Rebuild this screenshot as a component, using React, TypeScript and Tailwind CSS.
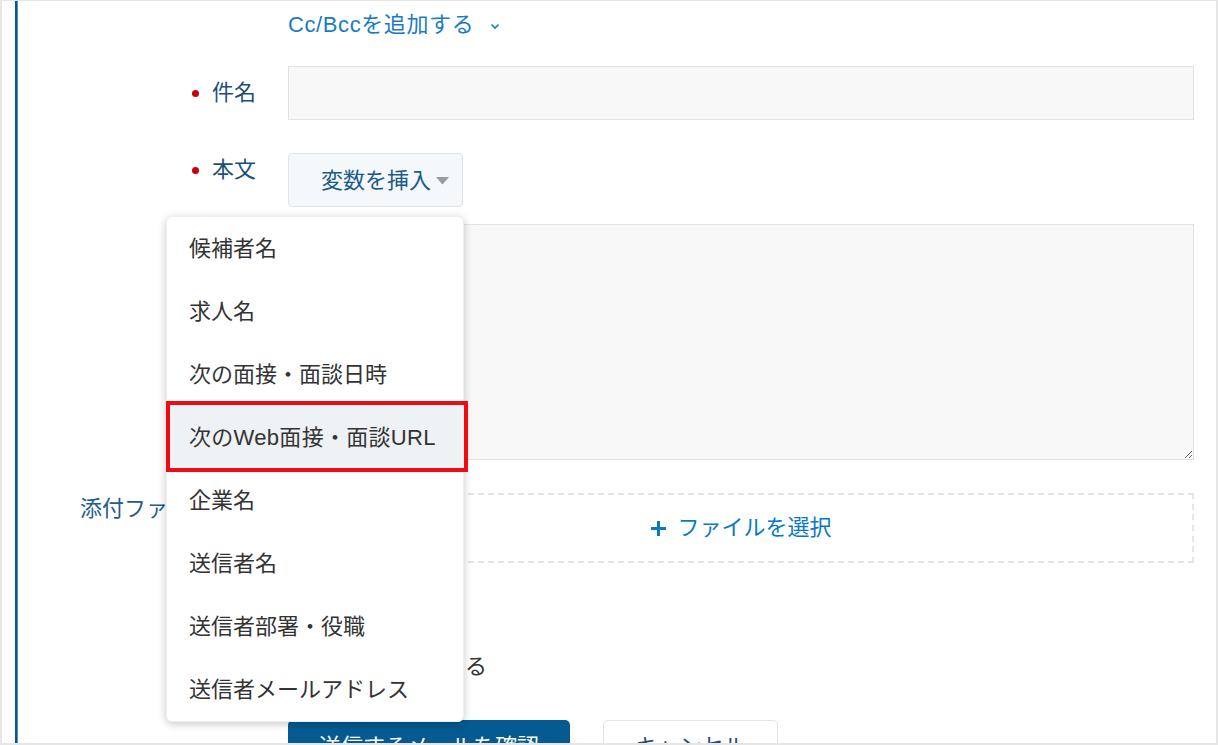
import React from "react";

const items = [
  "候補者名",
  "求人名",
  "次の面接・面談日時",
  "次のWeb面接・面談URL",
  "企業名",
  "送信者名",
  "送信者部署・役職",
  "送信者メールアドレス",
];

function Bullet() {
  return <span className="inline-block w-[7px] h-[7px] rounded-full bg-[#c8000a] mr-[13px] mt-[1px]" />;
}

export default function App() {
  return (
    <div className="relative w-[1218px] h-[745px] overflow-hidden bg-white border-t border-l-2 border-r-2 border-b-2 border-[#e6e6e6] font-['Liberation_Sans','Noto_Sans_CJK_JP',sans-serif] text-[22px]">
      <div className="flex h-full pl-[13px]">
        <div className="w-[3px] h-full flex">
          <div className="w-[2px] h-full bg-[#045a93]" />
          <div className="w-[1px] h-full bg-[#4a90c8]" />
        </div>
        <div className="flex-1 flex flex-col">
          {/* Cc/Bcc */}
          <div className="grid grid-cols-[270px_906px] pt-[10px]">
            <div />
            <div className="flex items-center h-[28px] text-[#1a7bc4] text-[22px] leading-[28px]">
              <span className="tracking-[0.6px]">Cc/Bccを追加する</span>
              <svg className="ml-[16px] mt-[2px]" width="10" height="7" viewBox="0 0 10 7">
                <path d="M1.5 1.5 L5 5 L8.5 1.5" fill="none" stroke="#1a7bc4" strokeWidth="1.6" />
              </svg>
            </div>
          </div>

          {/* Subject */}
          <div className="grid grid-cols-[270px_906px] mt-[27px] items-center">
            <div className="flex items-center justify-end pr-[32px] text-[#1e4f77] leading-[28px]">
              <Bullet />
              <span>件名</span>
            </div>
            <div className="h-[54px] bg-[#f8f8f8] border border-[#e2e2e2]" />
          </div>

          {/* Body */}
          <div className="grid grid-cols-[270px_906px] mt-[33px] items-start">
            <div className="flex items-center justify-end pr-[32px] pt-[3px] text-[#1e4f77] leading-[28px]">
              <Bullet />
              <span>本文</span>
            </div>
            <div className="flex flex-col">
              <div className="w-[175px] h-[54px] rounded-[4px] bg-[#f5f8fa] border border-[#dde6ed] flex items-center pl-[32px] text-[#1b5a8a]">
                <span className="leading-[28px] mt-[1px]">変数を挿入</span>
                <svg className="ml-[5px] mt-[1px]" width="13" height="8" viewBox="0 0 13 8">
                  <path d="M0 0 L13 0 L6.5 7.5 Z" fill="#9a9a9a" />
                </svg>
              </div>
              <textarea className="mt-[17px] h-[236px] w-[906px] bg-[#f8f8f8] border border-[#e2e2e2] outline-none resize-y" />
            </div>
          </div>

          {/* Attach */}
          <div className="grid grid-cols-[270px_906px] mt-[33px] items-start">
            <div className="flex justify-end pr-[76px] pt-[2px] text-[#215d8e] leading-[28px]">
              <span>添付ファイル</span>
            </div>
            <div className="h-[70px] border-2 border-dashed border-[#e4e4e4] flex items-center justify-center text-[#0b78c4]">
              <svg className="mr-[10px]" width="17" height="17" viewBox="0 0 17 17">
                <path d="M8.5 1 V16 M1 8.5 H16" stroke="#0b78c4" strokeWidth="3" />
              </svg>
              <span className="leading-[28px]">ファイルを選択</span>
            </div>
          </div>

          {/* Checkbox row */}
          <div className="grid grid-cols-[270px_906px] mt-[90px]">
            <div />
            <div className="flex items-center h-[28px] text-[#333] leading-[28px]">
              <span className="w-[18px] h-[18px] border border-[#bbb] rounded-[3px] mr-[5px]" />
              <span>候補者に送信する</span>
            </div>
          </div>

          {/* Buttons */}
          <div className="grid grid-cols-[270px_906px] mt-[39px]">
            <div />
            <div className="flex gap-[33px]">
              <div className="w-[282px] h-[54px] rounded-[5px] bg-[#045a91] text-white flex items-center justify-center">
                <span className="leading-[28px]">送信するメールを確認</span>
              </div>
              <div className="w-[175px] h-[54px] rounded-[5px] bg-white border border-[#dde6ed] text-[#1e4f77] flex items-center justify-center">
                <span className="leading-[28px]">キャンセル</span>
              </div>
            </div>
          </div>
        </div>
      </div>

      {/* Dropdown menu */}
      <div className="absolute left-[164px] top-[215px] w-[298px] rounded-[6px] bg-white shadow-[0_2px_8px_rgba(0,0,0,0.22)] border border-[#eeeeee]">
        {items.map((t, i) => (
          <div key={t} className="relative h-[63px] flex items-center pl-[22px] text-[#333] leading-[28px]">
            {i === 3 && (
              <div className="absolute left-[-1px] right-[-5px] top-[-5px] bottom-[-3px] bg-[#eef2f5] border-[4px] border-[#f00a14]" />
            )}
            <span className={i === 3 ? "relative tracking-[0.3px]" : "relative"}>{t}</span>
          </div>
        ))}
      </div>
    </div>
  );
}
